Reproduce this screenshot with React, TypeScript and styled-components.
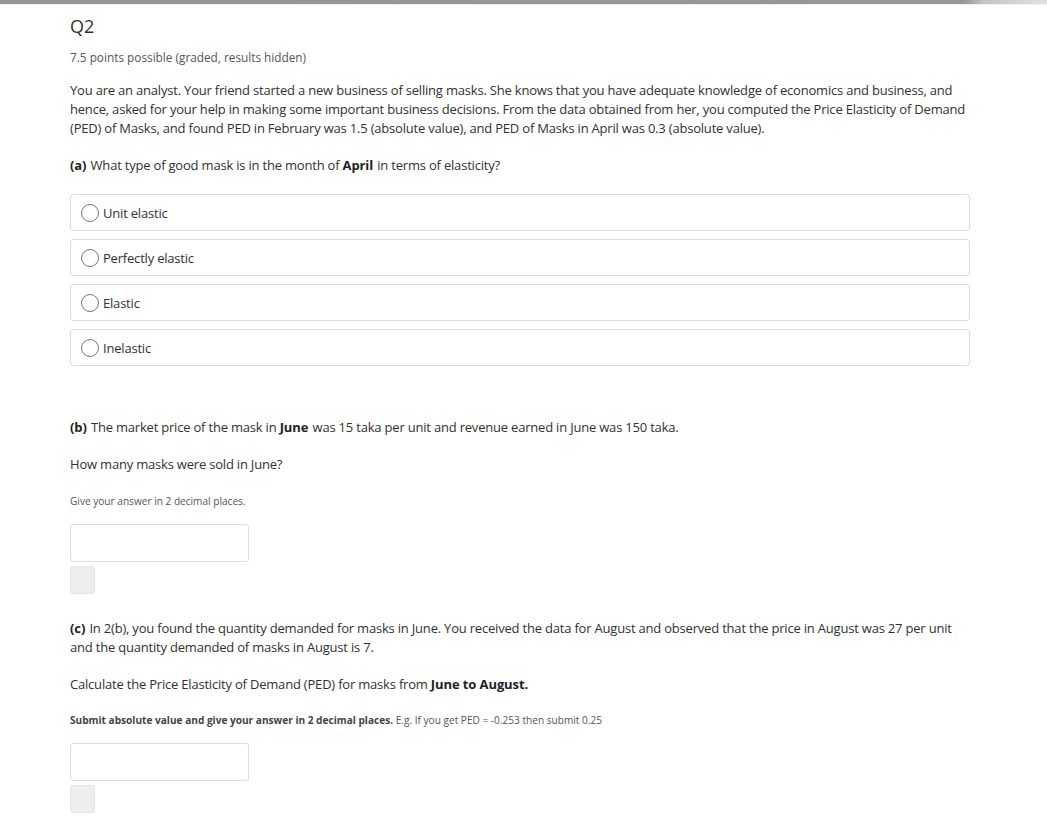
import React from "react";
import styled, { createGlobalStyle } from "styled-components";

const Global = createGlobalStyle`
  html, body { margin: 0; padding: 0; background: #fff; }
  body { font-family: "Open Sans", "Noto Sans", sans-serif; color: #313131; }
  * { box-sizing: border-box; }
`;

const TopBar = styled.div`
  height: 4px;
  background: linear-gradient(to right, #959595 0, #979797 92%, #c4c4c4 94%, #e2e2e2 100%);
  box-shadow: 0 1px 1px rgba(0, 0, 0, 0.06);
`;

const Main = styled.main`
  padding: 0 77px 0 70px;
  display: flex;
  flex-direction: column;
`;

const Title = styled.h3`
  margin: 10px 0 0;
  font-size: 18px;
  line-height: 25px;
  font-weight: 400;
  color: #313131;
`;

const Points = styled.div`
  margin-top: 9px;
  font-size: 11.8px;
  line-height: 18px;
  color: #555;
`;

const Para = styled.p<{ $mt?: number }>`
  margin: ${(p) => p.$mt ?? 18}px 0 0;
  font-size: 13px;
  letter-spacing: -0.2px;
  line-height: 19px;
  color: #313131;
  b { font-weight: 700; color: #222; letter-spacing: -0.1px; margin-right: 1px; }
`;

const Hint = styled.p<{ $mt?: number }>`
  margin: ${(p) => p.$mt ?? 18}px 0 0;
  font-size: 10.1px;
  line-height: 16px;
  color: #555;
  b { font-weight: 700; color: #444; }
`;

const Options = styled.div`
  margin-top: 19px;
  display: flex;
  flex-direction: column;
  gap: 8px;
`;

const Option = styled.label`
  height: 37px;
  border: 1px solid #dcdcdc;
  border-radius: 3px;
  display: flex;
  align-items: center;
  padding-left: 10px;
  gap: 4px;
  font-size: 13px;
  letter-spacing: -0.2px;
  color: #313131;
`;

const Radio = styled.span`
  width: 18px;
  height: 18px;
  border-radius: 50%;
  border: 1px solid #767676;
  background: #fff;
  flex: none;
`;

const Input = styled.div<{ $mt: number }>`
  margin-top: ${(p) => p.$mt}px;
  width: 179px;
  height: 38px;
  border: 1px solid #dedede;
  border-radius: 3px;
  background: #fff;
`;

const Btn = styled.div`
  margin-top: 4px;
  width: 25px;
  height: 28px;
  border-radius: 3px;
  background: #eeeeee;
  border: 1px solid #e4e4e4;
`;

const options = ["Unit elastic", "Perfectly elastic", "Elastic", "Inelastic"];

export default function App() {
  return (
    <>
      <Global />
      <TopBar />
      <Main>
        <Title>Q2</Title>
        <Points>7.5 points possible (graded, results hidden)</Points>
        <Para $mt={15}>
          You are an analyst. Your friend started a new business of selling masks. She knows that you have adequate
          knowledge of economics and business, and hence, asked for your help in making some important business
          decisions. From the data obtained from her, you computed the Price Elasticity of Demand (PED) of Masks, and
          found PED in February was 1.5 (absolute value), and PED of Masks in April was 0.3 (absolute value).
        </Para>
        <Para>
          <b>(a)</b> What type of good mask is in the month of <b>April</b> in terms of elasticity?
        </Para>
        <Options>
          {options.map((o) => (
            <Option key={o}>
              <Radio />
              {o}
            </Option>
          ))}
        </Options>
        <Para $mt={52}>
          <b>(b)</b> The market price of the mask in <b>June</b> was 15 taka per unit and revenue earned in June was 150
          taka.
        </Para>
        <Para>How many masks were sold in June?</Para>
        <Hint $mt={19}>Give your answer in 2 decimal places.</Hint>
        <Input $mt={15} />
        <Btn />
        <Para $mt={25}>
          <b>(c)</b> In 2(b), you found the quantity demanded for masks in June. You received the data for August and
          observed that the price in August was 27 per unit and the quantity demanded of masks in August is 7.
        </Para>
        <Para>
          Calculate the Price Elasticity of Demand (PED) for masks from <b>June to August.</b>
        </Para>
        <Hint $mt={18}>
          <b>Submit absolute value and give your answer in 2 decimal places.</b> E.g. If you get PED = -0.253 then
          submit 0.25
        </Hint>
        <Input $mt={15} />
        <Btn />
      </Main>
    </>
  );
}
